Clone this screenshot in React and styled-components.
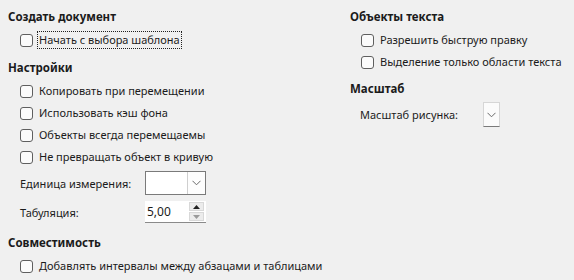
import React from "react"
import styled, { createGlobalStyle } from "styled-components"

const GlobalStyle = createGlobalStyle`
  html, body {
    margin: 0;
    background: #f0f0f0;
  }
  body {
    font-family: "Noto Sans", "Open Sans", sans-serif;
    font-size: 11px;
    color: #1b1b1b;
  }
`

const Page = styled.div`
  display: flex;
  width: 574px;
  height: 280px;
  box-sizing: border-box;
  padding: 8px 0 0 8px;
  overflow: hidden;
`
const Column = styled.div`
  display: flex;
  flex-direction: column;
  width: ${props => props.width};
`
const Section = styled.section`
  display: flex;
  flex-direction: column;
  margin-bottom: ${props => props.gap || "10px"};
`
const Heading = styled.div`
  font-weight: 700;
  font-size: 11.5px;
  height: 18px;
  line-height: 18px;
  margin-bottom: 5px;
`
const Body = styled.div`
  display: flex;
  flex-direction: column;
  gap: ${props => props.gap || "4px"};
  padding-left: ${props => props.indent || "12px"};
`
const CheckRow = styled.label`
  display: flex;
  align-items: center;
  height: 18px;
  white-space: nowrap;
`
const Box = styled.span`
  width: 11px;
  height: 11px;
  border: 1px solid #5f5f5f;
  border-radius: 3px;
  background: #fbfbfb;
  margin-right: 4px;
  flex: none;
`
const Label = styled.span`
  line-height: 16px;
  padding: 0 1px;
  border: 1px dotted ${props => (props.focused ? "#202020" : "transparent")};
`
const FieldRow = styled.div`
  display: flex;
  align-items: center;
  height: ${props => props.height};
  margin-top: ${props => props.top || "0"};
`
const FieldLabel = styled.span`
  width: ${props => props.width};
  flex: none;
  white-space: nowrap;
`
const Combo = styled.div`
  display: flex;
  width: 61px;
  height: 24px;
  box-sizing: border-box;
  background: #fff;
  border: 1px solid #7a7a7a;
`
const ComboText = styled.div`
  flex: 1;
`
const DropButton = styled.div`
  width: 17px;
  display: flex;
  align-items: center;
  justify-content: center;
  background: #fdfdfd;
  border-left: 1px solid #cfcfcf;
`
const BareDrop = styled.div`
  width: 17px;
  height: 25px;
  box-sizing: border-box;
  display: flex;
  align-items: center;
  justify-content: center;
  background: #fbfbfb;
  border: 1px solid #d6d6d6;
  border-bottom: 1px solid #7a7a7a;
`
const Spin = styled.div`
  display: flex;
  width: 61px;
  height: 22px;
  box-sizing: border-box;
  background: #fff;
  border-bottom: 1px solid #8a8a8a;
`
const SpinText = styled.div`
  flex: 1;
  padding-left: 2px;
  line-height: 21px;
  font-size: 12px;
`
const SpinButtons = styled.div`
  width: 15px;
  margin: 1px 2px 1px 0;
  display: flex;
  flex-direction: column;
  gap: 1px;
`
const SpinButton = styled.div`
  flex: 1;
  display: flex;
  align-items: center;
  justify-content: center;
  background: #ececec;
  border: 1px solid #d8d8d8;
`

const Chevron = () => (
  <svg width="9" height="6" viewBox="0 0 9 6">
    <path d="M0.5 0.8 L4.5 4.8 L8.5 0.8" fill="none" stroke="#6a6a6a" strokeWidth="1" />
  </svg>
)
const Tri = ({ up, color }) => (
  <svg width="7" height="4" viewBox="0 0 7 4">
    <path d={up ? "M0 4 L3.5 0 L7 4 Z" : "M0 0 L3.5 4 L7 0 Z"} fill={color} />
  </svg>
)

const Check = ({ children, focused }) => (
  <CheckRow>
    <Box />
    <Label focused={focused}>{children}</Label>
  </CheckRow>
)

const App = () => (
  <>
    <GlobalStyle />
    <Page>
      <Column width="342px">
        <Section>
          <Heading>Создать документ</Heading>
          <Body>
            <Check focused>Начать с выбора шаблона</Check>
          </Body>
        </Section>
        <Section gap="11px">
          <Heading>Настройки</Heading>
          <Body>
            <Check>Копировать при перемещении</Check>
            <Check>Использовать кэш фона</Check>
            <Check>Объекты всегда перемещаемы</Check>
            <Check>Не превращать объект в кривую</Check>
            <FieldRow height="24px" top="1px">
              <FieldLabel width="125px">Единица измерения:</FieldLabel>
              <Combo>
                <ComboText />
                <DropButton>
                  <Chevron />
                </DropButton>
              </Combo>
            </FieldRow>
            <FieldRow height="22px" top="2px">
              <FieldLabel width="125px">Табуляция:</FieldLabel>
              <Spin>
                <SpinText>5,00</SpinText>
                <SpinButtons>
                  <SpinButton>
                    <Tri up color="#222" />
                  </SpinButton>
                  <SpinButton>
                    <Tri color="#9a9a9a" />
                  </SpinButton>
                </SpinButtons>
              </Spin>
            </FieldRow>
          </Body>
        </Section>
        <Section>
          <Heading>Совместимость</Heading>
          <Body>
            <Check>Добавлять интервалы между абзацами и таблицами</Check>
          </Body>
        </Section>
      </Column>
      <Column width="220px">
        <Section gap="9px">
          <Heading>Объекты текста</Heading>
          <Body indent="11px">
            <Check>Разрешить быструю правку</Check>
            <Check>Выделение только области текста</Check>
          </Body>
        </Section>
        <Section>
          <Heading>Масштаб</Heading>
          <Body indent="10px">
            <FieldRow height="25px" top="-1px">
              <FieldLabel width="123px">Масштаб рисунка:</FieldLabel>
              <BareDrop>
                <Chevron />
              </BareDrop>
            </FieldRow>
          </Body>
        </Section>
      </Column>
    </Page>
  </>
)

export default App
